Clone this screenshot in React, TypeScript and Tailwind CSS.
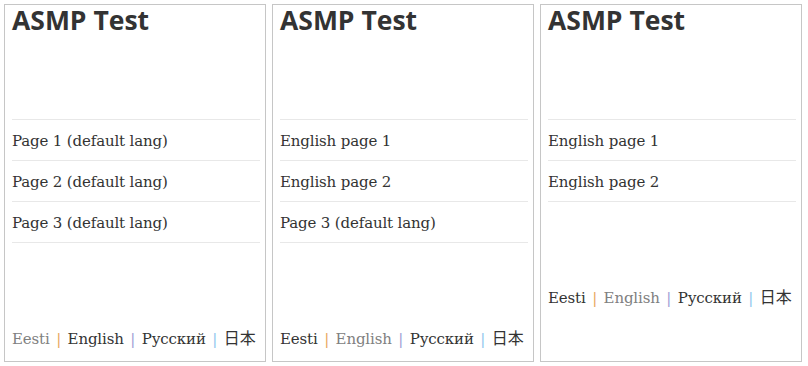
import React from "react";

type Panel = {
  pages: string[];
  current: string;
};

const panels: Panel[] = [
  { pages: ["Page 1 (default lang)", "Page 2 (default lang)", "Page 3 (default lang)"], current: "Eesti" },
  { pages: ["English page 1", "English page 2", "Page 3 (default lang)"], current: "English" },
  { pages: ["English page 1", "English page 2"], current: "English" },
];

const langs = ["Eesti", "English", "Русский", "日本"];
// separators show colour fringes in the shot
const sepColors = ["text-[#e8a660]", "text-[#9c9cd4]", "text-[#8ec4ee]"];

function LangBar({ current }: { current: string }) {
  return (
    <div className="mt-[82px] whitespace-nowrap text-[15px] tracking-[-0.15px] leading-[24px] text-[#333] font-['DejaVu_Serif','Noto_Sans_CJK_JP',serif]">
      {langs.map((l, i) => (
        <span key={l}>
          {i > 0 && <span className={`${sepColors[i - 1]} inline-block w-[18px] text-center`}>|</span>}
          <span
            className={`${l === current ? "text-[#808080]" : "text-[#333]"} ${
              l === "日本" ? "text-[16px] tracking-normal font-['Noto_Sans_CJK_JP',sans-serif]" : ""
            }`}
          >
            {l}
          </span>
        </span>
      ))}
    </div>
  );
}

export default function App() {
  return (
    <div className="w-[808px] h-[366px] bg-white flex gap-[6px] pl-[4px] pt-[4px]">
      {panels.map((p, idx) => (
        <div key={idx} className="w-[262px] h-[358px] border border-[#c6c6c6] pt-px pl-[7px] pr-[5px]">
          <h1 className="text-[26.5px] leading-[1.1] font-bold text-[#333] font-['Open_Sans',sans-serif]">
            ASMP Test
          </h1>
          <ul className="mt-[84px] text-[15px] tracking-[-0.15px] text-[#333] font-['DejaVu_Serif',serif]">
            {p.pages.map((pg) => (
              <li key={pg} className="h-[41px] pt-[3px] border-t border-[#e8e8e8] last:border-b last:h-[42px] flex items-center">
                {pg}
              </li>
            ))}
          </ul>
          <LangBar current={p.current} />
        </div>
      ))}
    </div>
  );
}
